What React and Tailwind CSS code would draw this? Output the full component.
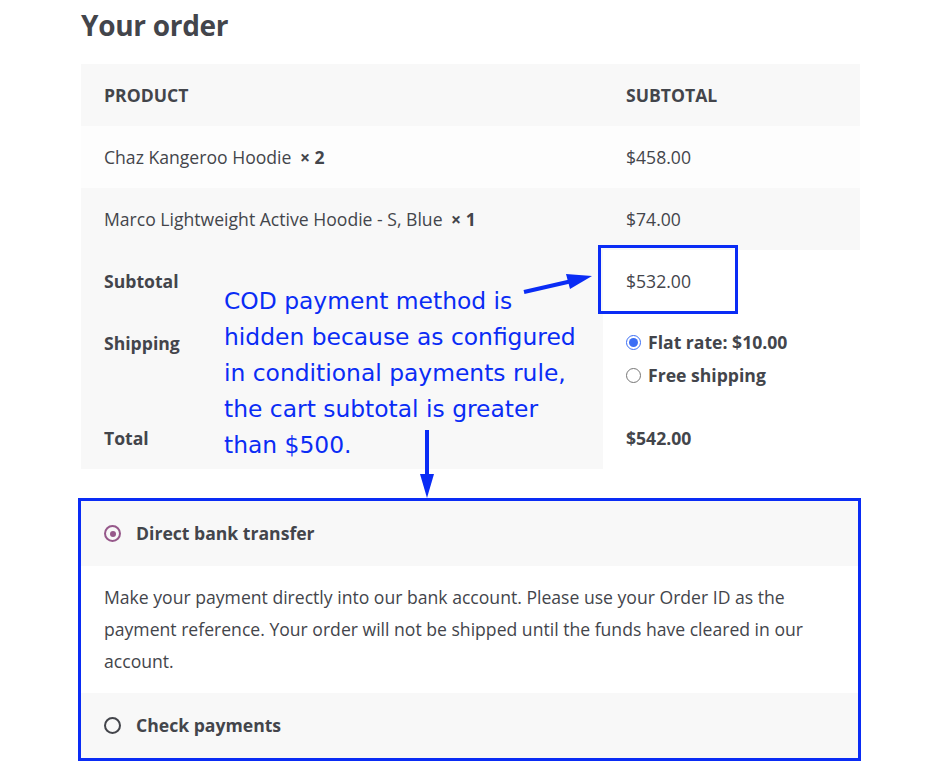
import React from 'react';

const Radio = ({ checked, color = 'border-[#43454b]' }) => (
  <span className={`inline-flex w-[17px] h-[17px] rounded-full border-2 ${color} items-center justify-center shrink-0`}>
    {checked && <span className="w-[6px] h-[6px] rounded-full bg-[#96588a]" />}
  </span>
);

const ShipRadio = ({ checked }) => (
  <span
    className={`inline-flex w-[15px] h-[15px] rounded-full border items-center justify-center shrink-0 ${
      checked ? 'border-[#3b6ef5] bg-white' : 'border-[#767676] bg-white'
    }`}
  >
    {checked && <span className="w-[9px] h-[9px] rounded-full bg-[#3b6ef5]" />}
  </span>
);

const App = () => {
  return (
    <div className="relative w-[950px] h-[776px] bg-white text-[#43454b] font-['Open_Sans',sans-serif] overflow-hidden">
      <div className="pl-[81px] w-[860px]">
        <h2 className="text-[28px] font-bold leading-[50px] h-[64px] tracking-[-0.3px]">Your order</h2>

        {/* Order table */}
        <div className="w-[779px] text-[17.6px]">
          <div className="flex h-[62px] items-center bg-[#f8f8f8] font-bold uppercase">
            <div className="w-[522px] pl-[23px]">Product</div>
            <div className="pl-[23px]">Subtotal</div>
          </div>
          <div className="flex h-[62px] items-center bg-[#fdfdfd]">
            <div className="w-[522px] pl-[23px]">
              Chaz Kangeroo Hoodie <strong className="ml-1">× 2</strong>
            </div>
            <div className="pl-[23px]">$458.00</div>
          </div>
          <div className="flex h-[62px] items-center bg-[#f8f8f8]">
            <div className="w-[522px] pl-[23px]">
              Marco Lightweight Active Hoodie - S, Blue <strong className="ml-1">× 1</strong>
            </div>
            <div className="pl-[23px]">$74.00</div>
          </div>

          <div className="flex">
            <div className="w-[522px] bg-[#f8f8f8] font-bold">
              <div className="h-[62px] flex items-center pl-[23px]">Subtotal</div>
              <div className="h-[95px] pt-[15px] pl-[23px] leading-[33px]">Shipping</div>
              <div className="h-[62px] flex items-center pl-[23px]">Total</div>
            </div>
            <div className="flex-1">
              <div className="h-[62px] flex items-center pl-[23px]">$532.00</div>
              <div className="h-[95px] pt-[14px] pl-[23px] font-bold flex flex-col leading-[33px]">
                <div className="flex items-center gap-[7px]">
                  <ShipRadio checked />
                  <span>Flat rate: $10.00</span>
                </div>
                <div className="flex items-center gap-[7px]">
                  <ShipRadio />
                  <span>Free shipping</span>
                </div>
              </div>
              <div className="h-[62px] flex items-center pl-[23px] font-bold">$542.00</div>
            </div>
          </div>
        </div>

        {/* Payment methods */}
        <div className="mt-[29px] -ml-[3px] w-[783px] border-[3px] border-[#0a2cf5] text-[17.6px]">
          <div className="h-[65px] bg-[#f8f8f8] flex items-center pl-[23px] gap-[15px] font-bold">
            <Radio checked color="border-[#96588a]" />
            <span>Direct bank transfer</span>
          </div>
          <div className="bg-white px-[23px] pt-[15px] pb-[16px] leading-[32px]">
            Make your payment directly into our bank account. Please use your Order ID as the
            <br />
            payment reference. Your order will not be shipped until the funds have cleared in our
            <br />
            account.
          </div>
          <div className="h-[65px] bg-[#f8f8f8] flex items-center pl-[23px] gap-[15px] font-bold">
            <Radio />
            <span>Check payments</span>
          </div>
        </div>
      </div>

      {/* Annotation overlay */}
      <div className="absolute left-[598px] top-[245px] w-[140px] h-[69px] border-[3px] border-[#0a2cf5]" />
      <p className="absolute left-[224px] top-[283px] whitespace-nowrap text-[23.4px] leading-[36px] text-[#0a2cf5] font-['DejaVu_Sans',sans-serif]">
        COD payment method is
        <br />
        hidden because as configured
        <br />
        in conditional payments rule,
        <br />
        the cart subtotal is greater
        <br />
        than $500.
      </p>
      <svg className="absolute left-0 top-0" width="950" height="776" viewBox="0 0 950 776">
        <line x1="524" y1="292" x2="572" y2="281" stroke="#0a2cf5" strokeWidth="4" />
        <polygon points="592,276 566,274 570,289" fill="#0a2cf5" />
        <line x1="427" y1="430" x2="427" y2="478" stroke="#0a2cf5" strokeWidth="4" />
        <polygon points="427,498 420,474 434,474" fill="#0a2cf5" />
      </svg>
    </div>
  );
};

export default App;
